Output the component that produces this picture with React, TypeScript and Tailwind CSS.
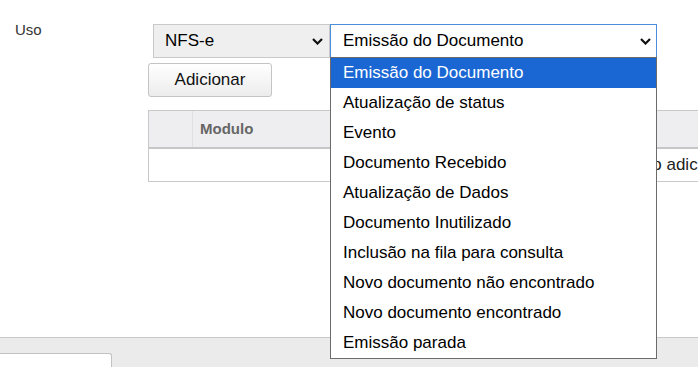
import React from "react";

const Chevron = () => (
  <svg width="11" height="7" viewBox="0 0 11 7" className="block">
    <polyline points="1,1 5.5,5.5 10,1" fill="none" stroke="#111" strokeWidth="2.2" />
  </svg>
);

const options = [
  "Emissão do Documento",
  "Atualização de status",
  "Evento",
  "Documento Recebido",
  "Atualização de Dados",
  "Documento Inutilizado",
  "Inclusão na fila para consulta",
  "Novo documento não encontrado",
  "Novo documento encontrado",
  "Emissão parada",
];

export default function App() {
  return (
    <div className="relative w-[698px] h-[367px] overflow-hidden bg-white flex flex-col font-['Liberation_Sans',Arial,sans-serif] text-black">
      <div className="flex flex-1 min-h-0">
        <div className="w-[148px] shrink-0 pl-[15px] pt-[19px] text-[15px] text-[#333]">Uso</div>
        <div className="flex flex-col pt-[24px] flex-1 min-w-0">
          <div className="flex ml-[5px]">
            <div className="w-[177px] h-[34px] shrink-0 bg-[#efefef] border border-[#c9c9c9] flex items-center justify-between pl-[11px] pr-[6px] text-[17px]">
              <span>NFS-e</span>
              <Chevron />
            </div>
            <div className="w-[327px] h-[34px] shrink-0 bg-white border border-[#4a8fdb] flex items-center justify-between pl-[12px] pr-[5px] text-[17px]">
              <span>Emissão do Documento</span>
              <Chevron />
            </div>
          </div>
          <button className="mt-[5px] w-[124px] h-[34px] rounded-[3px] border border-[#c4c4c4] bg-gradient-to-b from-white to-[#ececec] text-[17px] text-[#111]">
            Adicionar
          </button>
          <div className="mt-[13px] w-[700px] shrink-0 border-l border-t border-[#c9c9c9]">
            <div className="flex h-[38px] bg-[#eeeef0] border-b-2 border-[#c6c6c6]">
              <div className="w-[44px] border-r border-[#e0e0e0]"></div>
              <div className="pl-[7px] flex items-center text-[15px] font-bold text-[#666]">Modulo</div>
            </div>
            <div className="h-[33px] border-b border-[#c9c9c9] flex items-center pl-[388px] text-[17px] text-[#222]">
              <span>Nenhum módulo adicionado</span>
            </div>
          </div>
        </div>
      </div>
      <div className="h-[30px] shrink-0 bg-[#ebebeb] border-t border-[#c8c8c8] flex flex-col justify-end">
        <div className="w-[112px] h-[14px] bg-white border-t border-r border-[#c2c2c2] rounded-tr-[3px]"></div>
      </div>
      <div className="absolute left-[330px] top-[57px] w-[327px] bg-white border border-[#6b6b6b] text-[17px]">
        {options.map((o, i) => (
          <div
            key={o}
            className={
              i === 0
                ? "h-[30px] flex items-center pl-[12px] bg-[#1a67d4] text-white"
                : "h-[30px] flex items-center pl-[12px] text-black"
            }
          >
            {o}
          </div>
        ))}
      </div>
    </div>
  );
}
